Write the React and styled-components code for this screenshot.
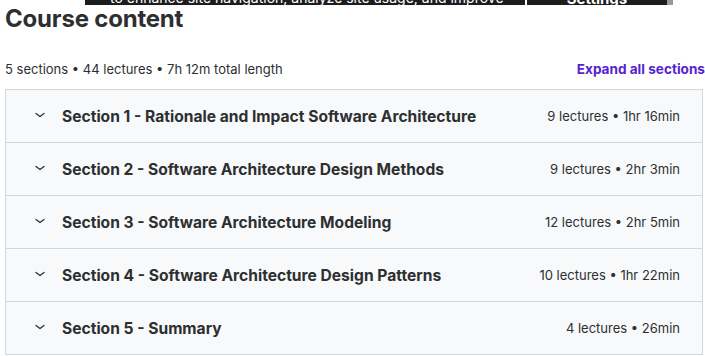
import React from "react";
import styled, { createGlobalStyle } from "styled-components";

const GlobalStyle = createGlobalStyle`
  body {
    margin: 0;
    background: #ffffff;
    font-family: Inter, "Noto Sans", Arial, sans-serif;
    color: #2d2f31;
  }
`;

const sections = [
  { title: "Section 1 - Rationale and Impact Software Architecture", meta: "9 lectures • 1hr 16min" },
  { title: "Section 2 - Software Architecture Design Methods", meta: "9 lectures • 2hr 3min" },
  { title: "Section 3 - Software Architecture Modeling", meta: "12 lectures • 2hr 5min" },
  { title: "Section 4 - Software Architecture Design Patterns", meta: "10 lectures • 1hr 22min" },
  { title: "Section 5 - Summary", meta: "4 lectures • 26min" },
];

const Page = styled.div`
  position: relative;
  width: 705px;
  height: 356px;
  overflow: hidden;
  padding-left: 5px;
  box-sizing: border-box;
`;

const CookieBanner = styled.div`
  position: absolute;
  top: -16px;
  left: 85px;
  width: 588px;
  height: 21px;
  display: flex;
  background: #1c1d1f;
  border-right: 6px solid #9a9a9a;
  box-sizing: border-box;
`;

const CookieText = styled.div`
  flex: 1;
  padding: 5px 0 0 25px;
  color: #ffffff;
  font-size: 14px;
  line-height: 17px;
  white-space: nowrap;
  overflow: hidden;
`;

const SettingsButton = styled.div`
  width: 140px;
  border-left: 2px solid #ffffff;
  color: #ffffff;
  font-weight: 700;
  font-size: 15px;
  line-height: 17px;
  padding-top: 6px;
  text-align: center;
`;

const Title = styled.h2`
  margin: 0;
  padding-top: 4px;
  font-size: 24px;
  line-height: 30px;
  font-weight: 700;
  letter-spacing: -0.2px;
`;

const SummaryBar = styled.div`
  display: flex;
  justify-content: space-between;
  align-items: center;
  width: 700px;
  margin-top: 25px;
  height: 20px;
  font-size: 13px;
`;

const ExpandButton = styled.span`
  color: #5624d0;
  font-weight: 700;
  font-size: 13.6px;
`;

const Accordion = styled.div`
  margin-top: 10px;
  width: 698px;
  border: 1px solid #d1d7dc;
  border-bottom: none;
  box-sizing: border-box;
`;

const Row = styled.div`
  display: flex;
  align-items: center;
  height: 52px;
  padding: 0 22px 0 26px;
  background: #f7f9fa;
  border-bottom: 1px solid #d1d7dc;
`;

const Chevron = styled.svg`
  width: 16px;
  height: 16px;
  flex-shrink: 0;
  margin-right: 14px;
  margin-top: -2px;
`;

const SectionTitle = styled.span`
  flex: 1;
  font-size: 15.6px;
  font-weight: 700;
`;

const Meta = styled.span`
  font-size: 13px;
`;

export default function App() {
  return (
    <Page>
      <GlobalStyle />
      <CookieBanner>
        <CookieText>to enhance site navigation, analyze site usage, and improve</CookieText>
        <SettingsButton>Settings</SettingsButton>
      </CookieBanner>
      <Title>Course content</Title>
      <SummaryBar>
        <span>5 sections • 44 lectures • 7h 12m total length</span>
        <ExpandButton>Expand all sections</ExpandButton>
      </SummaryBar>
      <Accordion>
        {sections.map((s) => (
          <Row key={s.title}>
            <Chevron viewBox="0 0 16 16" fill="none">
              <path d="M4 6.5 L8 9.5 L12 6.5" stroke="#2d2f31" strokeWidth="1.3" strokeLinecap="round" strokeLinejoin="round" />
            </Chevron>
            <SectionTitle>{s.title}</SectionTitle>
            <Meta>{s.meta}</Meta>
          </Row>
        ))}
      </Accordion>
    </Page>
  );
}
